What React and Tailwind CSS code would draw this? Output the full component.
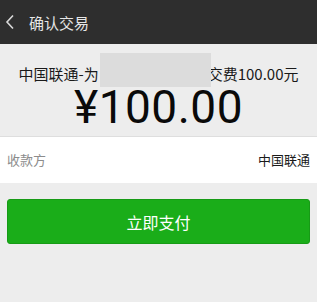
import React from "react";

function App() {
  return (
    <div className="w-[317px] h-[302px] bg-[#ededed] overflow-hidden" style={{ fontFamily: '"Noto Sans CJK SC", "Liberation Sans", sans-serif' }}>
      {/* Header */}
      <div className="h-[44px] bg-[#2e2e2e] flex items-center">
        <svg width="10" height="16" viewBox="0 0 10 16" className="ml-[5px]">
          <path d="M8 1.5 L2 8 L8 14.5" fill="none" stroke="#d9d9d9" strokeWidth="1.6" />
        </svg>
        <span className="ml-[14px] text-[15px] text-[#e6e6e6] leading-none">确认交易</span>
      </div>

      {/* Summary */}
      <div className="relative pt-[20px] pb-[3px] flex flex-col items-center border-b border-[#dedede]">
        <div className="flex items-center text-[15px] leading-[20px] text-[#1a1a1a] whitespace-nowrap">
          <span>中国联通-为</span>
          <div className="w-[109px] h-[20px]" />
          <span>交费100.00元</span>
        </div>
        <div className="absolute left-[100px] top-[9px] w-[111px] h-[34px] bg-[#dcdcdc]" />
        <div className="mt-[-3px] text-[46px] leading-[52px] text-[#0a0a0a] tracking-[0.5px]" style={{ fontFamily: '"Roboto", "Noto Sans CJK SC", sans-serif' }}>
          ¥100.00
        </div>
      </div>

      {/* Payee row */}
      <div className="h-[46px] bg-white flex items-center justify-between px-[7px] text-[13px]">
        <span className="text-[#8c8c8c]">收款方</span>
        <span className="text-[#1a1a1a]">中国联通</span>
      </div>

      {/* Pay button */}
      <div className="px-[7px] pt-[16px]">
        <button className="w-full h-[45px] rounded-[3px] bg-[#1aad19] text-white text-[16px] border border-[#179b16]">
          立即支付
        </button>
      </div>
    </div>
  );
}

export default App;
